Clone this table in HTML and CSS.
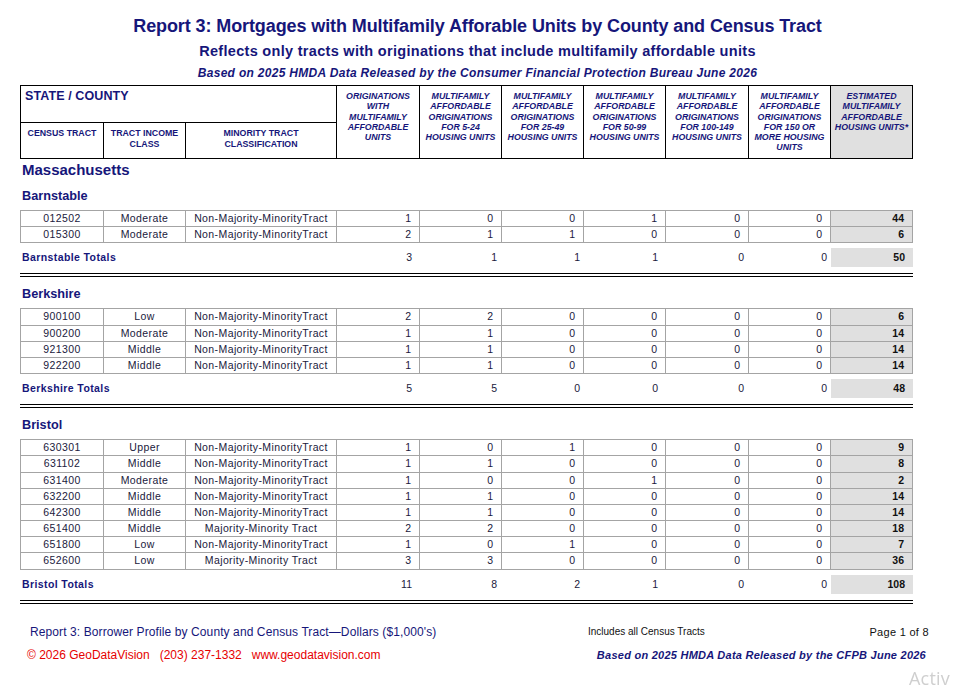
FILE: index.html
```html
<!DOCTYPE html>
<html lang="en">
<head>
  <meta charset="UTF-8" />
  <meta name="viewport" content="width=device-width, initial-scale=1.0"/>
  <title>Report 3: Mortgages with Multifamily Afforable Units</title>
  <link rel="stylesheet" href="styles.css">
</head>
<body>
  <div class="titles">
    <h1>Report 3: Mortgages with Multifamily Afforable Units by County and Census Tract</h1>
    <h2>Reflects only tracts with originations that include multifamily affordable units</h2>
    <h3>Based on 2025 HMDA Data Released by the Consumer Financial Protection Bureau June 2026</h3>
  </div>

  <div class="report">
    <div class="head cols">
      <div class="hc state">STATE / COUNTY</div>
      <div class="hc col-h">ORIGINATIONS<br>WITH<br>MULTIFAMILY<br>AFFORDABLE<br>UNITS</div>
      <div class="hc col-h">MULTIFAMILY<br>AFFORDABLE<br>ORIGINATIONS<br>FOR 5-24<br>HOUSING UNITS</div>
      <div class="hc col-h">MULTIFAMILY<br>AFFORDABLE<br>ORIGINATIONS<br>FOR 25-49<br>HOUSING UNITS</div>
      <div class="hc col-h">MULTIFAMILY<br>AFFORDABLE<br>ORIGINATIONS<br>FOR 50-99<br>HOUSING UNITS</div>
      <div class="hc col-h">MULTIFAMILY<br>AFFORDABLE<br>ORIGINATIONS<br>FOR 100-149<br>HOUSING UNITS</div>
      <div class="hc col-h">MULTIFAMILY<br>AFFORDABLE<br>ORIGINATIONS<br>FOR 150 OR<br>MORE HOUSING<br>UNITS</div>
      <div class="hc col-h est">ESTIMATED<br>MULTIFAMILY<br>AFFORDABLE<br>HOUSING UNITS*</div>
      <div class="hc sub">CENSUS TRACT</div>
      <div class="hc sub">TRACT INCOME<br>CLASS</div>
      <div class="hc sub">MINORITY TRACT<br>CLASSIFICATION</div>
    </div>

    <div class="state-name">Massachusetts</div>
    <div id="counties"></div>
  </div>

  <div class="footer">
    <div class="foot-line">
      <span class="foot-title">Report 3: Borrower Profile by County and Census Tract—Dollars ($1,000's)</span>
      <span class="foot-note">Includes all Census Tracts</span>
      <span class="foot-page">Page 1 of 8</span>
    </div>
    <div class="foot-line second">
      <span class="foot-contact">© 2026 GeoDataVision   (203) 237-1332   www.geodatavision.com</span>
      <span class="foot-source">Based on 2025 HMDA Data Released by the CFPB June 2026</span>
    </div>
  </div>

  <div class="watermark">Activ</div>

  <script>
    const counties = [
      {
        name: "Barnstable",
        rows: [
          ["012502", "Moderate", "Non-Majority-MinorityTract", 1, 0, 0, 1, 0, 0, 44],
          ["015300", "Moderate", "Non-Majority-MinorityTract", 2, 1, 1, 0, 0, 0, 6]
        ]
      },
      {
        name: "Berkshire",
        rows: [
          ["900100", "Low", "Non-Majority-MinorityTract", 2, 2, 0, 0, 0, 0, 6],
          ["900200", "Moderate", "Non-Majority-MinorityTract", 1, 1, 0, 0, 0, 0, 14],
          ["921300", "Middle", "Non-Majority-MinorityTract", 1, 1, 0, 0, 0, 0, 14],
          ["922200", "Middle", "Non-Majority-MinorityTract", 1, 1, 0, 0, 0, 0, 14]
        ]
      },
      {
        name: "Bristol",
        rows: [
          ["630301", "Upper", "Non-Majority-MinorityTract", 1, 0, 1, 0, 0, 0, 9],
          ["631102", "Middle", "Non-Majority-MinorityTract", 1, 1, 0, 0, 0, 0, 8],
          ["631400", "Moderate", "Non-Majority-MinorityTract", 1, 0, 0, 1, 0, 0, 2],
          ["632200", "Middle", "Non-Majority-MinorityTract", 1, 1, 0, 0, 0, 0, 14],
          ["642300", "Middle", "Non-Majority-MinorityTract", 1, 1, 0, 0, 0, 0, 14],
          ["651400", "Middle", "Majority-Minority Tract", 2, 2, 0, 0, 0, 0, 18],
          ["651800", "Low", "Non-Majority-MinorityTract", 1, 0, 1, 0, 0, 0, 7],
          ["652600", "Low", "Majority-Minority Tract", 3, 3, 0, 0, 0, 0, 36]
        ]
      }
    ];

    const holder = document.getElementById("counties");

    function cell(text, cls) {
      const div = document.createElement("div");
      div.className = cls;
      div.textContent = text;
      return div;
    }

    counties.forEach(county => {
      const block = document.createElement("div");
      block.className = "county";

      block.appendChild(cell(county.name, "county-name"));

      const rows = document.createElement("div");
      rows.className = "rows";

      const totals = [0, 0, 0, 0, 0, 0, 0];

      county.rows.forEach(r => {
        const row = document.createElement("div");
        row.className = "row cols";
        row.appendChild(cell(r[0], "dc center"));
        row.appendChild(cell(r[1], "dc center"));
        row.appendChild(cell(r[2], "dc center"));
        for (let i = 3; i < 10; i++) {
          row.appendChild(cell(r[i], i === 9 ? "dc num est" : "dc num"));
          totals[i - 3] += r[i];
        }
        rows.appendChild(row);
      });

      block.appendChild(rows);

      const total = document.createElement("div");
      total.className = "totals cols";
      total.appendChild(cell(county.name + " Totals", "tc label"));
      totals.forEach((t, i) => {
        total.appendChild(cell(t, i === 6 ? "tc num est" : "tc num"));
      });
      block.appendChild(total);

      holder.appendChild(block);
    });
  </script>
</body>
</html>
```

FILE: styles.css
```css
:root {
  --navy: #16167a;
  --ink: #20203c;
  --grid: #a4a4a4;
  --shade: #e0e0e0;
}

* {
  box-sizing: border-box;
}

html, body {
  overflow: hidden;
}

body {
  margin: 0;
  background: #fff;
  font-family: "Liberation Sans", Arial, sans-serif;
  color: var(--ink);
}

/* titles */

.titles {
  text-align: center;
  color: var(--navy);
  padding-top: 15px;
}

.titles h1 {
  margin: 0;
  font-size: 18px;
  line-height: 22px;
  letter-spacing: -0.1px;
}

.titles h2 {
  margin: 5px 0 0;
  font-size: 14.5px;
  line-height: 18px;
  letter-spacing: 0.3px;
}

.titles h3 {
  margin: 5px 0 0;
  font-size: 12px;
  line-height: 16px;
  font-style: italic;
  letter-spacing: 0.3px;
}

/* report grid */

.report {
  margin: 4px 0 0 20px;
  width: 893px;
}

.cols {
  display: grid;
  grid-template-columns: 83px 82px 151px 83px 82px 82px 82px 83px 82px 82px;
}

.head {
  grid-template-rows: 37px 36px;
  border-top: 1px solid #000;
  border-left: 1px solid #000;
  color: var(--navy);
}

.hc {
  border-right: 1px solid #000;
  border-bottom: 1px solid #000;
  font-weight: bold;
}

.hc.state {
  grid-column: 1 / 4;
  font-size: 12.5px;
  line-height: 14px;
  padding: 3px 0 0 4px;
  letter-spacing: 0.1px;
}

.hc.col-h {
  grid-row: span 2;
  text-align: center;
  font-style: italic;
  font-size: 8.8px;
  line-height: 10.3px;
  padding-top: 5px;
}

.hc.est {
  background: var(--shade);
}

.hc.sub {
  text-align: center;
  font-size: 8.8px;
  line-height: 10.6px;
  padding-top: 5px;
}

.state-name {
  margin-top: 2px;
  padding-left: 2px;
  font-size: 15px;
  line-height: 18px;
  font-weight: bold;
  color: var(--navy);
}

.county {
  border-bottom: 4px double #000;
}

.county-name {
  margin: 9px 0 6px;
  padding-left: 2px;
  font-size: 12.7px;
  line-height: 16px;
  font-weight: bold;
  color: var(--navy);
}

.rows {
  border-top: 1px solid var(--grid);
  border-left: 1px solid var(--grid);
}

.dc {
  height: 16.2px;
  border-right: 1px solid var(--grid);
  border-bottom: 1px solid var(--grid);
  font-size: 10.5px;
  line-height: 15px;
  letter-spacing: 0.4px;
  white-space: nowrap;
}

.dc.center {
  text-align: center;
}

.dc.num {
  text-align: right;
  padding-right: 8px;
  letter-spacing: 0;
}

.dc.est {
  background: var(--shade);
  font-weight: bold;
  color: #111;
}

.totals {
  margin: 5px 0 6px;
  padding-left: 1px;
  height: 19px;
}

.tc {
  font-size: 10.5px;
  line-height: 19px;
  text-align: right;
}

.tc.label {
  grid-column: 1 / 4;
  text-align: left;
  padding-left: 1px;
  font-weight: bold;
  color: var(--navy);
  letter-spacing: 0.4px;
}

.tc.num:nth-child(3n+2) { padding-right: 8px; }
.tc.num:nth-child(3n+3) { padding-right: 5px; }
.tc.num:nth-child(3n+4) { padding-right: 4px; }

.tc.est {
  background: var(--shade);
  font-weight: bold;
  color: #111;
  padding-right: 8px;
}

/* footer */

.footer {
  margin-top: 21px;
}

.foot-line {
  display: grid;
  grid-template-columns: 558px 1fr auto;
  padding: 0 26px 0 30px;
  line-height: 14px;
}

.foot-line.second {
  grid-template-columns: 1fr auto;
  margin-top: 9px;
  padding: 0 29px 0 27px;
}

.foot-title {
  font-size: 12px;
  letter-spacing: 0.1px;
  color: var(--navy);
}

.foot-note {
  font-size: 10px;
  color: #111;
}

.foot-page {
  font-size: 11px;
  letter-spacing: 0.3px;
  color: #111;
}

.foot-contact {
  font-size: 12px;
  color: #e60000;
  white-space: pre;
}

.foot-source {
  font-size: 11px;
  font-weight: bold;
  font-style: italic;
  letter-spacing: 0.25px;
  color: var(--navy);
}

.watermark {
  position: fixed;
  left: 909px;
  top: 669px;
  font-family: "Open Sans", sans-serif;
  font-size: 18px;
  line-height: 18px;
  letter-spacing: 0.2px;
  color: #cfcfcf;
  white-space: nowrap;
}
```
